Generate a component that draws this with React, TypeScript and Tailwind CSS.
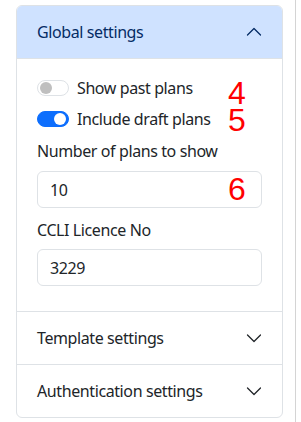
import { useState } from "react";

// Settings panel: a Bootstrap-ish accordion with the first section open.
function Chevron({ up, className }: { up?: boolean; className?: string }) {
  return (
    <svg viewBox="0 0 16 16" className={className} fill="none" stroke="currentColor" strokeWidth="1.3" strokeLinecap="round" strokeLinejoin="round">
      {up ? <path d="M1.5 11l6.5-6.5 6.5 6.5" /> : <path d="M1.5 5l6.5 6.5 6.5-6.5" />}
    </svg>
  );
}

function Toggle({ on, onChange, label }: { on: boolean; onChange: () => void; label: string }) {
  return (
    <label className="flex h-[24px] cursor-pointer items-center gap-[8px]">
      <button
        type="button"
        onClick={onChange}
        className={
          on
            ? "flex h-[16px] w-[32px] items-center justify-end rounded-full border border-[#0d6efd] bg-[#0d6efd] px-[2px]"
            : "flex h-[16px] w-[32px] items-center justify-start rounded-full border border-[#dee2e6] bg-white px-[2px]"
        }
      >
        <span className={on ? "h-[12px] w-[12px] rounded-full bg-white" : "h-[12px] w-[12px] rounded-full bg-[#bfbfbf]"} />
      </button>
      <span>{label}</span>
    </label>
  );
}

function Row({ title }: { title: string }) {
  return (
    <div className="flex h-[53px] items-center justify-between border-t border-[#dee2e6] px-[20px]">
      <span>{title}</span>
      <Chevron className="h-[16px] w-[16px] text-[#212529]" />
    </div>
  );
}

export default function App() {
  const [pastPlans, setPastPlans] = useState(false);
  const [draftPlans, setDraftPlans] = useState(true);
  const [count, setCount] = useState("10");
  const [ccli, setCcli] = useState("3229");

  return (
    <div className="h-[422px] w-[296px] border-r border-[#d4d4d4] bg-white pl-[16px] pr-[12px] pt-[5px] font-['Noto_Sans',sans-serif] text-[16px] leading-[24px] tracking-[-0.4px] text-[#212529]">
      <div className="relative overflow-hidden rounded-[6px] border border-[#dee2e6]">
        <div className="flex h-[52px] items-center justify-between bg-[#cfe2ff] px-[20px] text-[#052c65]">
          <span>Global settings</span>
          <Chevron up className="h-[16px] w-[16px]" />
        </div>

        <div className="flex flex-col border-t border-[#dee2e6] px-[20px] pb-[25px] pt-[17px]">
          <div className="flex flex-col gap-[7px]">
            <Toggle on={pastPlans} onChange={() => setPastPlans(!pastPlans)} label="Show past plans" />
            <Toggle on={draftPlans} onChange={() => setDraftPlans(!draftPlans)} label="Include draft plans" />
          </div>

          <label className="mt-[8px]">Number of plans to show</label>
          <input
            value={count}
            onChange={(e) => setCount(e.target.value)}
            className="mt-[8px] h-[37px] w-full rounded-[6px] border border-[#dee2e6] px-[12px] outline-none"
          />

          <label className="mt-[10px]">CCLI Licence No</label>
          <input
            value={ccli}
            onChange={(e) => setCcli(e.target.value)}
            className="mt-[7px] h-[37px] w-full rounded-[6px] border border-[#dee2e6] px-[12px] outline-none"
          />
        </div>

        <Row title="Template settings" />
        <Row title="Authentication settings" />

        {/* red annotation numbers */}
        <span className="absolute left-[211px] top-[75px] font-['Liberation_Sans',sans-serif] text-[32px] leading-[24px] tracking-normal text-[#ff0000]">4</span>
        <span className="absolute left-[211px] top-[102px] font-['Liberation_Sans',sans-serif] text-[32px] leading-[24px] tracking-normal text-[#ff0000]">5</span>
        <span className="absolute left-[211px] top-[171px] font-['Liberation_Sans',sans-serif] text-[32px] leading-[24px] tracking-normal text-[#ff0000]">6</span>
      </div>
    </div>
  );
}
